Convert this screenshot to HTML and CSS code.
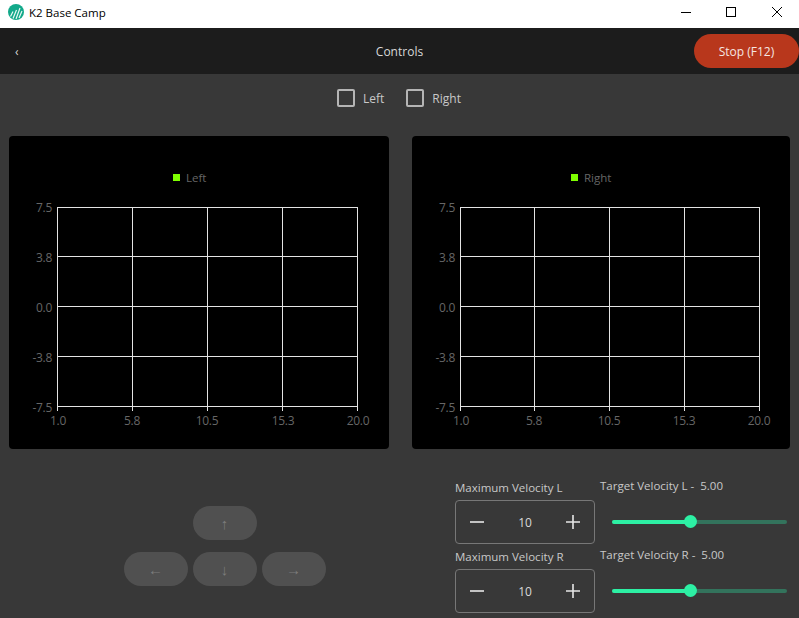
FILE: index.html
```html
<!doctype html>
<html lang="en">
    <head>
        <meta charset="UTF-8">
        <title>K2 Base Camp</title>
        <link rel="stylesheet" href="styles.css">
    </head>
    <body>
        <div class="titlebar">
            <svg class="logo" width="16" height="16" viewBox="0 0 16 16">
                <circle cx="8" cy="8" r="8" fill="#12a98a"/>
                <path d="M2.500 12.500 L5 7.500 M5 14.500 L8.500 6 M8 15 L12 4 M11 14 L14 7" stroke="#e8f8f4" stroke-width="1.200" fill="none"/>
            </svg>
            <span class="app-name">K2 Base Camp</span>
            <div class="win-buttons">
                <svg width="12" height="12" viewBox="0 0 12 12"><path d="M2 6.500H12" stroke="#000"/></svg>
                <svg width="12" height="12" viewBox="0 0 12 12"><rect x="1.500" y="1.500" width="9" height="9" fill="none" stroke="#000"/></svg>
                <svg width="12" height="12" viewBox="0 0 12 12"><path d="M1 1L11 11M11 1L1 11" stroke="#000" fill="none"/></svg>
            </div>
        </div>

        <header class="topbar">
            <span class="back">‹</span>
            <span class="page-title">Controls</span>
            <button class="stop">Stop (F12)</button>
        </header>

        <div class="checks">
            <label class="check"><span class="box"></span>Left</label>
            <label class="check"><span class="box"></span>Right</label>
        </div>

        <main class="charts">
            <section class="chart">
                <svg width="380" height="313" viewBox="0 0 380 313">
                    <rect x="164" y="38" width="7" height="7" fill="#7fff00"/>
                    <text x="177" y="46" class="legend">Left</text>
                    <path class="grid" d="M48 71.500H348.500M48 120.500H348.500M48 170.500H348.500M48 220.500H348.500M48 270.500H348.500M48.500 71V275M123.500 71V275M198.500 71V275M273.500 71V275M348.500 71V275"/>
                    <text x="43" y="76" class="y">7.5</text>
                    <text x="43" y="126" class="y">3.8</text>
                    <text x="43" y="176" class="y">0.0</text>
                    <text x="43" y="226" class="y">-3.8</text>
                    <text x="43" y="276" class="y">-7.5</text>
                    <text x="49" y="289" class="x">1.0</text>
                    <text x="123" y="289" class="x">5.8</text>
                    <text x="198" y="289" class="x">10.5</text>
                    <text x="274" y="289" class="x">15.3</text>
                    <text x="349" y="289" class="x">20.0</text>
                </svg>
            </section>
            <section class="chart">
                <svg width="378" height="313" viewBox="0 0 378 313">
                    <rect x="159" y="38" width="7" height="7" fill="#7fff00"/>
                    <text x="172" y="46" class="legend">Right</text>
                    <path class="grid" d="M48 71.500H347.500M48 120.500H347.500M48 170.500H347.500M48 220.500H347.500M48 270.500H347.500M48.500 71V275M122.500 71V275M197.500 71V275M272.500 71V275M347.500 71V275"/>
                    <text x="43" y="76" class="y">7.5</text>
                    <text x="43" y="126" class="y">3.8</text>
                    <text x="43" y="176" class="y">0.0</text>
                    <text x="43" y="226" class="y">-3.8</text>
                    <text x="43" y="276" class="y">-7.5</text>
                    <text x="49" y="289" class="x">1.0</text>
                    <text x="122" y="289" class="x">5.8</text>
                    <text x="197" y="289" class="x">10.5</text>
                    <text x="272" y="289" class="x">15.3</text>
                    <text x="347" y="289" class="x">20.0</text>
                </svg>
            </section>
        </main>

        <div class="bottom">
            <div class="pad">
                <div class="pad-row"><button class="arrow">↑</button></div>
                <div class="pad-row">
                    <button class="arrow">←</button>
                    <button class="arrow">↓</button>
                    <button class="arrow">→</button>
                </div>
            </div>
            <div class="velocity">
                <div class="vel-row">
                    <div class="max">
                        <div class="max-label">Maximum Velocity L</div>
                        <div class="stepper">
                            <svg width="16" height="16" viewBox="0 0 16 16"><path d="M1 8H15" stroke="#e6e6e6" stroke-width="1.600"/></svg>
                            <span>10</span>
                            <svg width="16" height="16" viewBox="0 0 16 16"><path d="M1 8H15M8 1V15" stroke="#e6e6e6" stroke-width="1.600"/></svg>
                        </div>
                    </div>
                    <div class="target">
                        <div class="target-label">Target Velocity L -&nbsp; 5.00</div>
                        <div class="slider"><div class="fill"></div><div class="knob"></div></div>
                    </div>
                </div>
                <div class="vel-row">
                    <div class="max">
                        <div class="max-label">Maximum Velocity R</div>
                        <div class="stepper">
                            <svg width="16" height="16" viewBox="0 0 16 16"><path d="M1 8H15" stroke="#e6e6e6" stroke-width="1.600"/></svg>
                            <span>10</span>
                            <svg width="16" height="16" viewBox="0 0 16 16"><path d="M1 8H15M8 1V15" stroke="#e6e6e6" stroke-width="1.600"/></svg>
                        </div>
                    </div>
                    <div class="target">
                        <div class="target-label">Target Velocity R -&nbsp; 5.00</div>
                        <div class="slider"><div class="fill"></div><div class="knob"></div></div>
                    </div>
                </div>
            </div>
        </div>
    </body>
</html>
```

FILE: styles.css
```css
html, body {
    height: 618px;
    overflow: hidden;
}
body {
    margin: 0;
    background: #383838;
    color: #d8d8d8;
    font-family: "Open Sans", "Noto Sans", sans-serif;
    font-size: 12px;
}
button {
    font-family: inherit;
    border: 0;
    padding: 0;
}
.titlebar {
    height: 28px;
    box-sizing: border-box;
    background: #fff;
    color: #000;
    display: flex;
    align-items: center;
    padding: 0 0 4px 8px;
}
.logo {
    margin-right: 5px;
}
.app-name {
    font-size: 11.500px;
}
.win-buttons {
    margin-left: auto;
    display: flex;
    gap: 34px;
    padding-right: 16px;
}
.topbar {
    height: 46px;
    background: #1c1c1c;
    display: flex;
    align-items: center;
    justify-content: space-between;
    padding: 0 0 0 15px;
    box-sizing: border-box;
}
.back {
    width: 80px;
    font-size: 12px;
}
.page-title {
    font-size: 12px;
    margin-left: 10px;
}
.stop {
    width: 105px;
    height: 34px;
    border-radius: 17px;
    background: #b8371c;
    color: #f5e6e2;
    font-size: 12px;
}
.checks {
    height: 62px;
    box-sizing: border-box;
    padding: 0 1px 14px 0;
    display: flex;
    justify-content: center;
    align-items: center;
    gap: 22px;
}
.check {
    display: flex;
    align-items: center;
    gap: 8px;
    color: #c8c8c8;
}
.box {
    width: 14px;
    height: 14px;
    border: 2px solid #b5b5b5;
    border-radius: 2px;
}
.charts {
    display: flex;
    gap: 23px;
    padding-left: 9px;
}
.chart {
    height: 313px;
    background: #000;
    border-radius: 4px;
}
.chart svg {
    display: block;
}
.chart text {
    font-family: "Open Sans", "Noto Sans", sans-serif;
    font-size: 12px;
    letter-spacing: -0.300px;
    fill: #666;
}
.chart .legend {
    font-size: 11.500px;
    letter-spacing: 0;
}
.chart .y {
    text-anchor: end;
}
.chart .x {
    text-anchor: middle;
}
.grid {
    stroke: #e4e4e4;
    stroke-width: 1;
    fill: none;
}
.bottom {
    display: flex;
    padding-top: 26px;
}
.pad {
    width: 446px;
    padding: 31px 0 0 3px;
    display: flex;
    flex-direction: column;
    gap: 12px;
    box-sizing: border-box;
}
.pad-row {
    display: flex;
    justify-content: center;
    gap: 5px;
}
.arrow {
    width: 64px;
    height: 34px;
    border-radius: 17px;
    background: #505050;
    color: #7c7c7c;
    font-size: 15px;
}
.velocity {
    display: flex;
    flex-direction: column;
}
.vel-row {
    display: flex;
}
.max {
    width: 145px;
    margin-left: 9px;
}
.max-label {
    height: 17px;
    line-height: 17px;
    margin-top: 4px;
    font-size: 11.500px;
    color: #c8c8c8;
}
.stepper {
    width: 140px;
    height: 44px;
    box-sizing: border-box;
    margin-top: 4px;
    border: 1px solid #777;
    border-radius: 4px;
    display: flex;
    align-items: center;
    justify-content: space-between;
    padding: 0 13px;
}
.target {
    width: 190px;
}
.target-label {
    height: 17px;
    line-height: 17px;
    margin-top: 2px;
    font-size: 11.500px;
    color: #c8c8c8;
}
.slider {
    position: relative;
    width: 175px;
    height: 4px;
    margin: 26px 0 0 12px;
    border-radius: 2px;
    background: #33735c;
}
.fill {
    width: 78px;
    height: 4px;
    border-radius: 2px;
    background: #2df0a4;
}
.knob {
    position: absolute;
    left: 72px;
    top: -5px;
    width: 13px;
    height: 13px;
    border-radius: 50%;
    background: #2df0a4;
}
```
